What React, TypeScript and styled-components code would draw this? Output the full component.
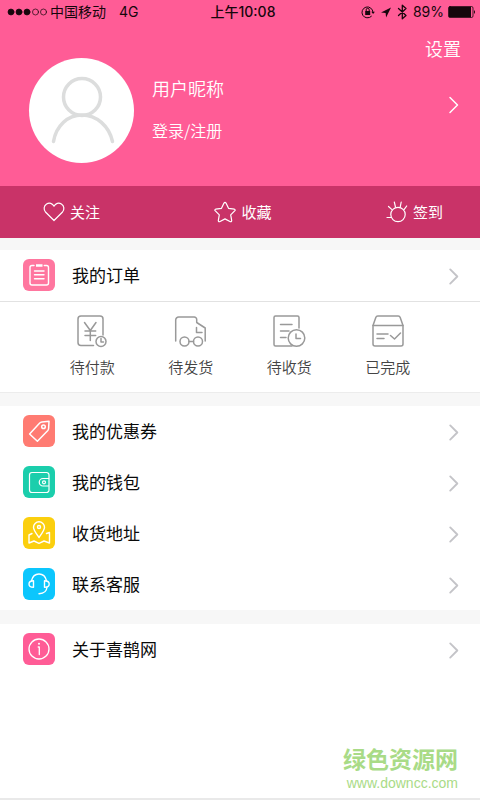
import React from "react";
import styled, { createGlobalStyle } from "styled-components";

const GlobalStyle = createGlobalStyle`
  * { box-sizing: border-box; }
  body {
    margin: 0;
    background: #fff;
    font-family: "Noto Sans CJK SC", "Noto Sans", sans-serif;
  }
  button { font: inherit; color: inherit; border: 0; padding: 0; background: none; cursor: pointer; }
  a { color: inherit; text-decoration: none; }
  svg { display: block; flex: none; fill: none; stroke: currentColor; stroke-linecap: round; stroke-linejoin: round; }
`;

const Page = styled.div`
  display: flex;
  flex-direction: column;
  min-height: 100vh;
  background: #fff;
  color: #0a0a0a;
`;

const Header = styled.header`
  background: #ff5c96;
  color: #fff;
`;

const StatusBar = styled.div`
  display: grid;
  grid-template-columns: 1fr auto 1fr;
  align-items: center;
  height: 24px;
  padding: 0 4px 0 7px;
  color: #16060c;
  font-family: Inter, "Noto Sans CJK SC", sans-serif;
  font-size: 14px;
  line-height: 24px;
`;

const StatusSide = styled.div<{ $end?: boolean }>`
  display: flex;
  align-items: center;
  justify-content: ${(p) => (p.$end ? "flex-end" : "flex-start")};
  gap: ${(p) => (p.$end ? "4px" : "3px")};
`;

const Network = styled.span`
  margin-left: 10px;
`;

const Clock = styled.span`
  padding-left: 3px;
  font-weight: 500;
`;

const SettingsRow = styled.div`
  display: flex;
  justify-content: flex-end;
  height: 34px;
  padding: 12px 19px 0 0;
`;

const SettingsButton = styled.button`
  font-size: 18px;
  font-weight: 350;
  line-height: 24px;
`;

const Profile = styled.div`
  display: flex;
  align-items: center;
  gap: 18px;
  height: 128px;
  padding: 0 20px 23px 29px;
`;

const Avatar = styled.div`
  flex: none;
  width: 105px;
  height: 105px;
  border-radius: 50%;
  background: #fff;
  color: #dcdddd;
`;

const ProfileText = styled.div`
  display: flex;
  flex: 1;
  flex-direction: column;
  align-items: flex-start;
  gap: 18px;
  padding-bottom: 4px;
  font-weight: 350;
`;

const Nickname = styled.span`
  font-size: 18px;
  line-height: 24px;
`;

const LoginLink = styled.a`
  font-size: 16px;
  line-height: 24px;
`;

const ProfileArrow = styled.button`
  padding-bottom: 12px;
`;

const QuickBar = styled.nav`
  display: flex;
  align-items: center;
  justify-content: space-between;
  height: 52px;
  padding: 0 37px 0 43px;
  background: #c93368;
`;

const QuickButton = styled.button`
  display: flex;
  align-items: center;
  gap: 5px;
  font-size: 15px;
  line-height: 24px;
`;

const Gap = styled.div<{ $size: number }>`
  height: ${(p) => p.$size}px;
  background: #f7f7f7;
`;

const Row = styled.a`
  display: flex;
  align-items: center;
  gap: 17px;
  height: 51px;
  padding: 0 20px 2px 23px;
  font-size: 17px;
  line-height: 24px;
`;

const RowLabel = styled.span`
  flex: 1;
`;

const Tile = styled.span<{ $color: string }>`
  width: 32px;
  height: 32px;
  border-radius: 6px;
  background: ${(p) => p.$color};
  color: #fff;
`;

const RowArrow = styled.span`
  padding-top: 3px;
  color: #c4c4c8;
`;

const Orders = styled.div`
  display: grid;
  grid-template-columns: repeat(4, 1fr);
  height: 92px;
  padding: 12px 43px 0;
  border-top: 1px solid #e2e2e2;
  border-bottom: 1px solid #ececec;
`;

const OrderButton = styled.button`
  display: flex;
  flex-direction: column;
  align-items: center;
  justify-content: flex-start;
  gap: 7px;
  color: #999;
`;

const OrderLabel = styled.span`
  color: #444;
  font-size: 15px;
  font-weight: 350;
  line-height: 24px;
`;

const Footer = styled.footer`
  display: flex;
  flex: 1;
  flex-direction: column;
  align-items: flex-end;
  justify-content: flex-end;
  padding: 0 22px 7px 0;
  border-bottom: 2px solid #e9e9e9;
  color: #a9db87;
`;

const SiteName = styled.span`
  font-size: 23px;
  font-weight: 700;
  line-height: 34px;
`;

const SiteUrl = styled.a`
  font-family: "Liberation Sans", sans-serif;
  font-size: 14px;
  line-height: 16px;
`;

const Chevron = ({ width = 1.5, height = 18 }: { width?: number; height?: number }) => (
  <svg width="12" height={height} viewBox="0 0 12 18" strokeWidth={width} aria-hidden="true" strokeLinecap="butt">
    <path d="M2 1.5 9.5 9 2 16.5" />
  </svg>
);

const SignalDots = () => (
  <svg width="40" height="10" viewBox="0 0 40 10" strokeWidth="0.7" aria-hidden="true">
    {[4, 12, 20, 28.5, 36.5].map((cx, i) => (
      <circle key={cx} cx={cx} cy="5" r="3" fill={i < 3 ? "currentColor" : "none"} />
    ))}
  </svg>
);

const LockIcon = () => (
  <svg width="15" height="14" viewBox="0 0 15 14" strokeWidth="1" aria-hidden="true">
    <path d="M10.4 11.3A5.5 5.5 0 1 1 12 7.2" />
    <path d="m10.3 6.8 3.6 0-1.8 2.2z" fill="currentColor" stroke="none" />
    <rect x="4.2" y="6" width="5" height="4" fill="currentColor" stroke="none" />
    <path d="M5.2 6V4.8a1.5 1.5 0 0 1 3 0V6" />
  </svg>
);

const LocationIcon = () => (
  <svg width="12" height="11" viewBox="0 0 12 11" aria-hidden="true">
    <path d="M11 .5 1 5.6l4.6.4.5 4.6z" fill="currentColor" stroke="none" />
  </svg>
);

const BluetoothIcon = () => (
  <svg width="13" height="16" viewBox="0 0 13 16" strokeWidth="1.3" aria-hidden="true" strokeLinejoin="miter">
    <path d="m2.5 4.500 7.500 7-3.700 3.300V1.200L10 4.500l-7.500 7" />
  </svg>
);

const BatteryIcon = () => (
  <svg width="28" height="12" viewBox="0 0 28 12" strokeWidth="0.8" aria-hidden="true">
    <rect x=".5" y=".5" width="24.5" height="11" rx="1.5" />
    <rect x="1" y="1" width="22" height="10" fill="currentColor" stroke="none" />
    <path d="M26 4q2 2 0 4z" fill="currentColor" stroke="none" />
  </svg>
);

const PersonIcon = () => (
  <svg width="105" height="105" viewBox="0 0 105 105" strokeWidth="3.5" aria-hidden="true">
    <circle cx="53" cy="39" r="18.5" />
    <path d="M24.500 83.500C27 68 38.500 57 53 57s27 11 30.500 26.500" />
  </svg>
);

const HeartIcon = () => (
  <svg width="22" height="22" viewBox="0 0 22 22" strokeWidth="1.2" aria-hidden="true">
    <path d="M11 19.500 2.700 11.300C.2 8.700.8 4.600 3.600 2.900 6.300 1.300 9.500 2.300 11 5.200c1.500-2.900 4.700-3.900 7.400-2.300 2.800 1.700 3.400 5.800.9 8.400z" />
  </svg>
);

const StarIcon = () => (
  <svg width="22" height="22" viewBox="0 0 22 22" strokeWidth="1.2" aria-hidden="true">
    <path d="M10 2.100q1-1.600 2 0l2.500 5.200 5.900.9q1.300.5.500 1.500l-4.200 4.200 1 5.700q0 1.400-1.300 1.100L11 17.900l-5.400 2.800q-1.300.3-1.300-1.100l1-5.700-4.200-4.200q-.8-1 .5-1.500l5.900-.9z" />
  </svg>
);

const SunIcon = () => (
  <svg width="22" height="22" viewBox="0 0 22 22" strokeWidth="1.2" aria-hidden="true">
    <circle cx="12" cy="13.500" r="7.200" />
    <path d="M2.500 5.500l3.200 2.900M8.300 1l1.200 5.200M15.200 1l-1 5.200M20.700 5l-2.500 3.400M1 16.500h4.300" />
  </svg>
);

const ClipboardIcon = () => (
  <svg width="32" height="32" viewBox="0 0 32 32" strokeWidth="1.4" aria-hidden="true">
    <path d="M11 6.500H9a2 2 0 0 0-2 2V24a2 2 0 0 0 2 2h14.500a2 2 0 0 0 2-2V8.500a2 2 0 0 0-2-2h-2.200" />
    <path d="M13 6.500h6.500" strokeWidth="2.500" strokeLinecap="butt" />
    <path d="M11.500 12h9.500M11.500 15.800h9.500M11.500 19.700h9.500" />
  </svg>
);

const TagIcon = () => (
  <svg width="32" height="32" viewBox="0 0 32 32" strokeWidth="1.5" aria-hidden="true">
    <path d="m6.600 19 9.900-10.700q1-1.100 2.500-1.300l7-.8-.4 7.300q-.1 1.300-1 2.300L14.400 26.200z" />
    <circle cx="20.500" cy="11.800" r="1.800" />
  </svg>
);

const WalletIcon = () => (
  <svg width="32" height="32" viewBox="0 0 32 32" strokeWidth="1.2" aria-hidden="true">
    <path d="M26 12V9a2.500 2.500 0 0 0-2.500-2.500H9A2.500 2.500 0 0 0 6.500 9v15A2.500 2.500 0 0 0 9 26.500h14.500A2.500 2.500 0 0 0 26 24v-3.500" />
    <path d="M26 12.500V20h-6a3.750 3.750 0 0 1 0-7.500z" />
    <circle cx="21" cy="16.300" r="1.500" />
  </svg>
);

const MapIcon = () => (
  <svg width="32" height="32" viewBox="0 0 32 32" strokeWidth="1.4" aria-hidden="true">
    <path d="M16 20.500c-2.800-4-5.500-7.200-5.500-10.200a5.500 5.500 0 0 1 11 0c0 3-2.700 6.200-5.500 10.200z" />
    <circle cx="16" cy="10" r="1.500" />
    <path d="M9 16.500 6 18v8l5-2 5 2.300 5-2.300 5.500 2V15.500l-3 1" />
  </svg>
);

const HeadsetIcon = () => (
  <svg width="32" height="32" viewBox="0 0 32 32" strokeWidth="1.4" aria-hidden="true">
    <path d="M8.500 12.700C9.500 8.500 12.300 6 16 6s6.500 2.500 7.500 6.700" />
    <path d="M10.500 12.700v6.600C7.300 19.300 6 18 6 16s1.300-3.300 4.500-3.300zM21.500 12.700v6.600c3.200 0 4.700-1.300 4.700-3.300s-1.500-3.300-4.700-3.300z" />
    <path d="M24 19c-.3 4-3 6.500-8 6.700" />
  </svg>
);

const InfoIcon = () => (
  <svg width="32" height="32" viewBox="0 0 32 32" strokeWidth="1.3" aria-hidden="true">
    <circle cx="16" cy="16" r="10" />
    <path d="M15.200 14h1.100v7.500" />
    <circle cx="16" cy="10.800" r="1" fill="currentColor" stroke="none" />
  </svg>
);

const PayIcon = () => (
  <svg width="34" height="34" viewBox="0 0 34 34" strokeWidth="1.5" aria-hidden="true">
    <path d="M18.500 31.500H6a3 3 0 0 1-3-3V5a3 3 0 0 1 3-3h19a3 3 0 0 1 3 3v16" />
    <path d="m9.500 8.500 5.800 8 5.700-8M15.300 16.500v10M10 17h10.700M10 21.500h10.700" />
    <circle cx="26" cy="27.500" r="5" />
    <path d="M26 24.500V28h2.500" />
  </svg>
);

const TruckIcon = () => (
  <svg width="34" height="34" viewBox="0 0 34 34" strokeWidth="1.5" aria-hidden="true">
    <path d="M1.700 27V6a3 3 0 0 1 3-3h15.500a2.500 2.500 0 0 1 2.500 2.500v3l8.500 5.500v13M22.500 13.500v5H28" />
    <circle cx="10.500" cy="27.500" r="4.500" />
    <circle cx="24" cy="27.500" r="4.500" />
    <path d="M15 27.500h4.500" />
  </svg>
);

const ReceiptIcon = () => (
  <svg width="34" height="34" viewBox="0 0 34 34" strokeWidth="1.5" aria-hidden="true">
    <path d="M27 14V3.500A1.500 1.500 0 0 0 25.500 2h-22A1.500 1.500 0 0 0 2 3.500v27A1.500 1.500 0 0 0 3.500 32H20M8.500 10.500H20M8.500 17H17M8.500 23.500H14" />
    <circle cx="24.500" cy="24" r="8.300" />
    <path d="M24 20v4.500h4.500" />
  </svg>
);

const BoxIcon = () => (
  <svg width="34" height="34" viewBox="0 0 34 34" strokeWidth="1.5" aria-hidden="true">
    <path d="m2 11.500 2.800-8Q5.300 2 6.800 2h20.400q1.500 0 2 1.500l2.800 8z" />
    <path d="M2 11.500V30a2 2 0 0 0 2 2h26a2 2 0 0 0 2-2V11.500M6 20h11M6 24.500h7M19.500 21.500l4 3.500 6-6" />
  </svg>
);

type MenuItem = { label: string; color: string; icon: React.ReactNode };

const MenuRow = ({ label, color, icon }: MenuItem) => (
  <Row href="#">
    <Tile $color={color}>{icon}</Tile>
    <RowLabel>{label}</RowLabel>
    <RowArrow>
      <Chevron width={2} height={17} />
    </RowArrow>
  </Row>
);

const quickActions = [
  { label: "关注", icon: <HeartIcon /> },
  { label: "收藏", icon: <StarIcon /> },
  { label: "签到", icon: <SunIcon /> },
];

const orderStates = [
  { label: "待付款", icon: <PayIcon /> },
  { label: "待发货", icon: <TruckIcon /> },
  { label: "待收货", icon: <ReceiptIcon /> },
  { label: "已完成", icon: <BoxIcon /> },
];

const services: MenuItem[] = [
  { label: "我的优惠券", color: "#ff7b72", icon: <TagIcon /> },
  { label: "我的钱包", color: "#1bceac", icon: <WalletIcon /> },
  { label: "收货地址", color: "#fbcf0e", icon: <MapIcon /> },
  { label: "联系客服", color: "#0cc6fd", icon: <HeadsetIcon /> },
];

export default function App() {
  return (
    <Page>
      <GlobalStyle />
      <Header>
        <StatusBar>
          <StatusSide>
            <SignalDots />
            <span>中国移动</span>
            <Network>4G</Network>
          </StatusSide>
          <Clock>上午10:08</Clock>
          <StatusSide $end>
            <LockIcon />
            <LocationIcon />
            <BluetoothIcon />
            <span>89%</span>
            <BatteryIcon />
          </StatusSide>
        </StatusBar>
        <SettingsRow>
          <SettingsButton>设置</SettingsButton>
        </SettingsRow>
        <Profile>
          <Avatar>
            <PersonIcon />
          </Avatar>
          <ProfileText>
            <Nickname>用户昵称</Nickname>
            <LoginLink href="#">登录/注册</LoginLink>
          </ProfileText>
          <ProfileArrow aria-label="个人资料">
            <Chevron />
          </ProfileArrow>
        </Profile>
        <QuickBar>
          {quickActions.map((a) => (
            <QuickButton key={a.label}>
              {a.icon}
              {a.label}
            </QuickButton>
          ))}
        </QuickBar>
      </Header>
      <Gap $size={12} />
      <MenuRow label="我的订单" color="#ff769f" icon={<ClipboardIcon />} />
      <Orders>
        {orderStates.map((o) => (
          <OrderButton key={o.label}>
            {o.icon}
            <OrderLabel>{o.label}</OrderLabel>
          </OrderButton>
        ))}
      </Orders>
      <Gap $size={13} />
      {services.map((s) => (
        <MenuRow key={s.label} {...s} />
      ))}
      <Gap $size={14} />
      <MenuRow label="关于喜鹊网" color="#ff5c96" icon={<InfoIcon />} />
      <Footer>
        <SiteName>绿色资源网</SiteName>
        <SiteUrl href="#">www.downcc.com</SiteUrl>
      </Footer>
    </Page>
  );
}
